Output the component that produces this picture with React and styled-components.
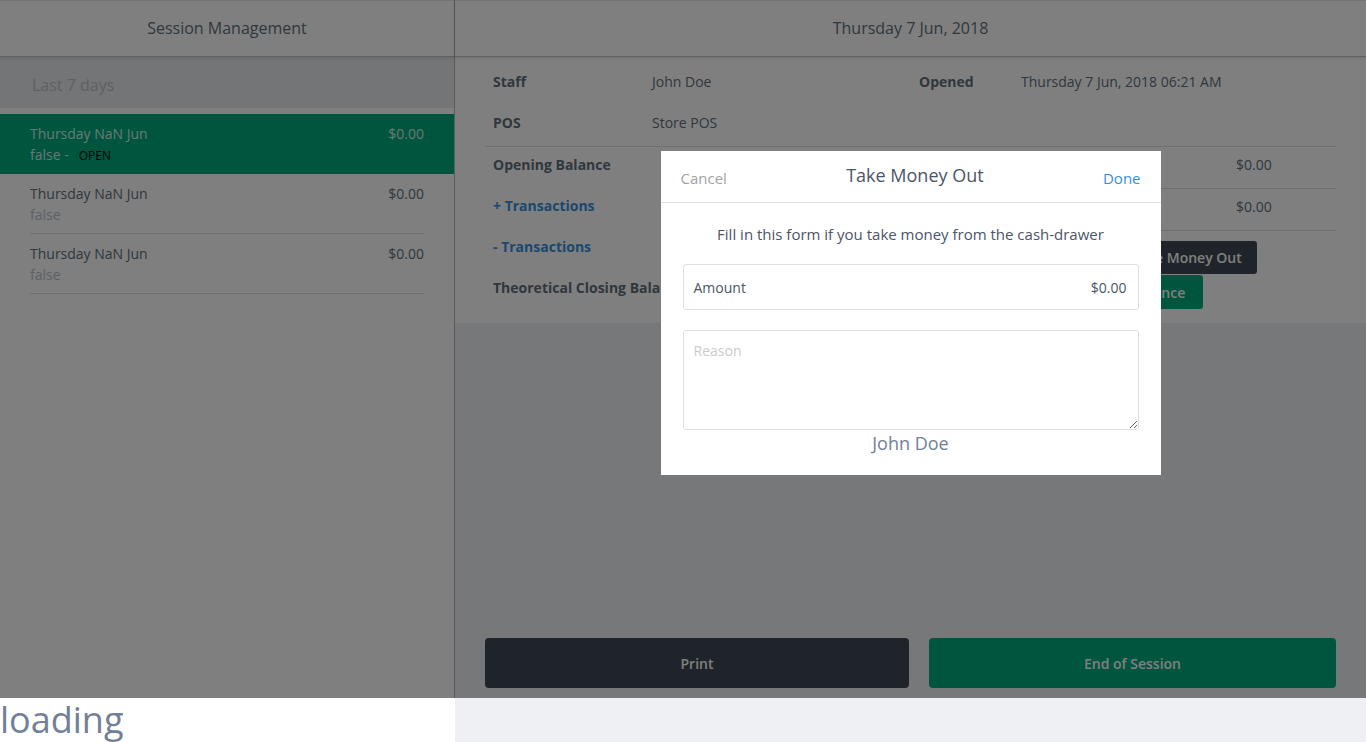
import React from "react";
import styled, { createGlobalStyle } from "styled-components";

const GlobalStyle = createGlobalStyle`
  * {
    box-sizing: border-box;
  }

  body {
    margin: 0;
    background-color: #eff0f3;
    font-family: "Open Sans", "Liberation Sans", sans-serif;
    color: #606f7b;
  }
`;

const Shell = styled.div`
  position: relative;
  display: grid;
  grid-template-columns: 455px 1fr;
  height: 698px;
`;

const Sidebar = styled.aside`
  display: flex;
  flex-direction: column;
  background-color: #fff;
  border-right: 1px solid #b4b4b4;
`;

const PanelHeader = styled.header`
  position: relative;
  z-index: 1;
  height: 57px;
  line-height: 55px;
  text-align: center;
  font-size: 16px;
  color: #606f7b;
  background-color: #fff;
  border-top: 1px solid #e4e4e4;
  border-bottom: 1px solid #c4c4c4;
  box-shadow: 0 1px 4px rgba(0, 0, 0, 0.12);
`;

const RangeBar = styled.div`
  height: 51px;
  padding: 5px 0 0 32px;
  display: flex;
  align-items: center;
  font-size: 16px;
  color: #b8c2cc;
  background-color: #e8eaed;
  margin-bottom: 6px;
`;

const SessionItem = styled.div`
  padding: 0 30px;
  background-color: ${(p) => (p.$selected ? "#00ab7e" : "transparent")};
`;

const SessionBody = styled.div`
  display: grid;
  grid-template-columns: 1fr auto;
  grid-auto-rows: 21px;
  padding: 9px 0 8px;
  font-size: 14px;
  line-height: 21px;
  border-bottom: ${(p) => (p.$selected ? "0" : "1px solid #dae1e7")};
  height: ${(p) => (p.$selected ? "60px" : "auto")};
  color: ${(p) => (p.$selected ? "rgba(255, 255, 255, 0.85)" : "#606f7b")};
`;

const SessionSub = styled.div`
  grid-column: 1 / -1;
  color: ${(p) => (p.$selected ? "rgba(255, 255, 255, 0.85)" : "#b8c2cc")};
`;

const Badge = styled.span`
  margin-left: 10px;
  font-size: 12px;
  line-height: 1;
  text-transform: uppercase;
  color: #000;
`;

const Main = styled.main`
  display: flex;
  flex-direction: column;
  background-color: #eff0f3;
`;

const Details = styled.section`
  background-color: #fff;
  padding: 5px 30px 0;
`;

const InfoGrid = styled.div`
  display: grid;
  grid-template-columns: 159px 267px 102px 1fr;
  grid-auto-rows: 41px;
  font-size: 14px;
  line-height: 21px;
`;

const Cell = styled.div`
  padding: ${(p) => (p.$tight ? "7px 8px 0" : "9px 8px 0")};
  font-weight: ${(p) => (p.$bold ? 700 : 400)};
  color: ${(p) => (p.$tone === "blue" ? "#3490dc" : "#606f7b")};
  white-space: nowrap;
`;

const BalanceSection = styled.div`
  display: grid;
  grid-template-columns: 1fr 1fr;
  margin-top: 2px;
  border-top: 1px solid #dae1e7;
  font-size: 14px;
  line-height: 21px;
`;

const BalanceLabels = styled.div`
  display: grid;
  grid-auto-rows: 41px;
`;

const BalanceValues = styled.div`
  display: flex;
  flex-direction: column;
`;

const ValueRow = styled.div`
  display: grid;
  grid-template-columns: 1fr 100px;
  height: 42px;
  padding-top: 7px;
  border-bottom: 1px solid #dae1e7;
  color: #606f7b;
`;

const Actions = styled.div`
  align-self: flex-end;
  width: 220px;
  display: flex;
  flex-direction: column;
  align-items: flex-start;
  gap: 1px;
  padding: 10px 0 14px;
`;

const ActionButton = styled.button`
  height: ${(p) => (p.$variant === "green" ? "34px" : "33px")};
  padding: ${(p) => (p.$variant === "green" ? "0 18px 0 16px" : "0 15px")};
  border: 0;
  border-radius: 3px;
  font-family: inherit;
  font-size: 14px;
  font-weight: 600;
  color: #fff;
  background-color: ${(p) => (p.$variant === "green" ? "#00ab7e" : "#3d4852")};
`;

const Spacer = styled.div`
  flex: 1;
`;

const Footer = styled.footer`
  display: grid;
  grid-template-columns: 424px 1fr;
  gap: 20px;
  padding: 0 30px 10px;
`;

const FooterButton = styled.button`
  height: 50px;
  border: 0;
  border-radius: 4px;
  font-family: inherit;
  font-size: 14px;
  font-weight: 600;
  color: #fff;
  background-color: ${(p) => (p.$variant === "green" ? "#00ab7e" : "#3d4852")};
`;

const Overlay = styled.div`
  position: absolute;
  inset: 0;
  z-index: 10;
  display: grid;
  grid-template-columns: 455px 1fr;
  align-items: start;
  padding-top: 151px;
  background-color: rgba(0, 0, 0, 0.5);
`;

const Modal = styled.div`
  grid-column: 2;
  justify-self: center;
  width: 500px;
  background-color: #fff;
`;

const ModalHeader = styled.div`
  display: flex;
  justify-content: space-between;
  align-items: center;
  height: 52px;
  padding: 3px 20px 0;
  border-bottom: 1px solid #dae1e7;
  font-size: 15px;
`;

const Cancel = styled.span`
  color: #a3a3a3;
`;

const ModalTitle = styled.span`
  margin-top: -6px;
  font-size: 18px;
  color: #4a5568;
`;

const Done = styled.span`
  color: #3490dc;
`;

const ModalBody = styled.div`
  padding: 20px 22px 18px;
  display: flex;
  flex-direction: column;
  font-size: 14px;
  line-height: 21px;
  color: #4a5568;
`;

const Hint = styled.p`
  margin: 0 0 19px;
  text-align: center;
  font-size: 15px;
  line-height: 22px;
`;

const AmountBox = styled.div`
  display: flex;
  justify-content: space-between;
  align-items: center;
  height: 46px;
  padding: 0 11px 0 10px;
  border: 1px solid #dfdfdf;
  border-radius: 3px;
`;

const Reason = styled.textarea`
  display: block;
  margin-top: 20px;
  height: 100px;
  padding: 10px 10px;
  border: 1px solid #dfdfdf;
  border-radius: 3px;
  font-family: inherit;
  font-size: 14px;
  color: #4a5568;

  &::placeholder {
    color: #cbcbcb;
  }
`;

const Signature = styled.div`
  text-align: center;
  font-size: 18px;
  line-height: 27px;
  color: #718096;
`;

const LoadingRow = styled.div`
  display: grid;
  grid-template-columns: 455px 1fr;
  height: 44px;
`;

const LoadingBox = styled.div`
  background-color: #fff;
  font-size: 36px;
  line-height: 44px;
  color: #718096;
`;

const sessions = [
  { id: 1, title: "Thursday NaN Jun", total: "$0.00", open: true },
  { id: 2, title: "Thursday NaN Jun", total: "$0.00" },
  { id: 3, title: "Thursday NaN Jun", total: "$0.00" },
];

const App = () => {
  return (
    <>
      <GlobalStyle />
      <Shell>
        <Sidebar>
          <PanelHeader>Session Management</PanelHeader>
          <RangeBar>Last 7 days</RangeBar>
          {sessions.map((s) => (
            <SessionItem key={s.id} $selected={s.open}>
              <SessionBody $selected={s.open}>
                <span>{s.title}</span>
                <span>{s.total}</span>
                <SessionSub $selected={s.open}>
                  false{s.open && " -"}
                  {s.open && <Badge>Open</Badge>}
                </SessionSub>
              </SessionBody>
            </SessionItem>
          ))}
        </Sidebar>

        <Main>
          <PanelHeader>Thursday 7 Jun, 2018</PanelHeader>
          <Details>
            <InfoGrid>
              <Cell $bold>Staff</Cell>
              <Cell>John Doe</Cell>
              <Cell $bold>Opened</Cell>
              <Cell>Thursday 7 Jun, 2018 06:21 AM</Cell>
              <Cell $bold>POS</Cell>
              <Cell>Store POS</Cell>
            </InfoGrid>
            <BalanceSection>
              <BalanceLabels>
                <Cell $bold $tight>Opening Balance</Cell>
                <Cell $bold $tight $tone="blue">+ Transactions</Cell>
                <Cell $bold $tight $tone="blue">- Transactions</Cell>
                <Cell $bold $tight>Theoretical Closing Balance</Cell>
              </BalanceLabels>
              <BalanceValues>
                <ValueRow>
                  <span />
                  <span>$0.00</span>
                </ValueRow>
                <ValueRow>
                  <span />
                  <span>$0.00</span>
                </ValueRow>
                <Actions>
                  <ActionButton>Take Money Out</ActionButton>
                  <ActionButton $variant="green">Balance</ActionButton>
                </Actions>
              </BalanceValues>
            </BalanceSection>
          </Details>
          <Spacer />
          <Footer>
            <FooterButton>Print</FooterButton>
            <FooterButton $variant="green">End of Session</FooterButton>
          </Footer>
        </Main>

        <Overlay>
          <Modal>
            <ModalHeader>
              <Cancel>Cancel</Cancel>
              <ModalTitle>Take Money Out</ModalTitle>
              <Done>Done</Done>
            </ModalHeader>
            <ModalBody>
              <Hint>Fill in this form if you take money from the cash-drawer</Hint>
              <AmountBox>
                <span>Amount</span>
                <span>$0.00</span>
              </AmountBox>
              <Reason placeholder="Reason" />
              <Signature>John Doe</Signature>
            </ModalBody>
          </Modal>
        </Overlay>
      </Shell>
      <LoadingRow>
        <LoadingBox>loading</LoadingBox>
      </LoadingRow>
    </>
  );
};

export default App;
